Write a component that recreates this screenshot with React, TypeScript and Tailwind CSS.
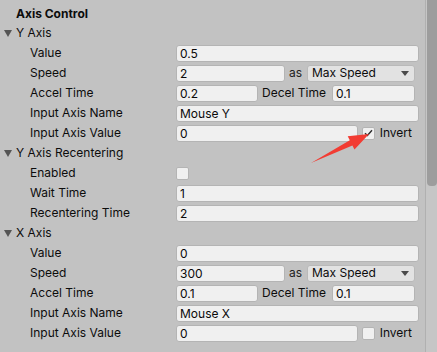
import React from 'react';

const font = { fontFamily: 'Inter, "Noto Sans", sans-serif' };

function Field({ value, className = '' }: { value: string; className?: string }) {
  return (
    <div
      className={`h-[17px] rounded-[3px] border border-[#b4b4b4] bg-[#f0f0f0] pl-[3px] leading-[15px] text-[12px] text-[#0a0a0a] ${className}`}
    >
      {value}
    </div>
  );
}

function Check({ checked }: { checked?: boolean }) {
  return (
    <div className="flex h-[13px] w-[13px] shrink-0 items-center justify-center rounded-[2px] border border-[#b4b4b4] bg-[#f0f0f0]">
      {checked && (
        <svg width="9" height="8" viewBox="0 0 9 8">
          <path d="M1 4.2 L3.4 6.5 L8 1.2" fill="none" stroke="#2b2b2b" strokeWidth="1.4" />
        </svg>
      )}
    </div>
  );
}

function Row({ label, children }: { label: string; children: React.ReactNode }) {
  return (
    <div className="flex h-5 items-center">
      <div className="w-[176px] shrink-0 pl-[30px]">{label}</div>
      <div className="flex min-w-0 flex-1 items-center">{children}</div>
    </div>
  );
}

function Foldout({ label }: { label: string }) {
  return (
    <div className="flex h-5 items-center">
      <svg className="ml-[4px] mr-[4px]" width="8" height="7" viewBox="0 0 8 7">
        <path d="M0 0 L8 0 L4 7 Z" fill="#555555" />
      </svg>
      <span>{label}</span>
    </div>
  );
}

function SpeedRow({ value }: { value: string }) {
  return (
    <Row label="Speed">
      <Field value={value} className="flex-1" />
      <span className="ml-[4px] text-[#222]">as</span>
      <div className="ml-[5px] mr-[4px] flex h-[17px] w-[108px] items-center justify-between rounded-[3px] border border-[#b9b9b9] bg-[#e2e2e2] pl-[4px] pr-[5px]">
        <span>Max Speed</span>
        <svg width="8" height="5" viewBox="0 0 8 5">
          <path d="M0 0 L8 0 L4 5 Z" fill="#4a4a4a" />
        </svg>
      </div>
    </Row>
  );
}

function AccelRow({ accel, decel }: { accel: string; decel: string }) {
  return (
    <Row label="Accel Time">
      <Field value={accel} className="flex-1" />
      <span className="ml-[4px] mr-[6px]">Decel Time</span>
      <Field value={decel} className="mr-[4px] w-[83px]" />
    </Row>
  );
}

function InvertRow({ checked }: { checked?: boolean }) {
  return (
    <Row label="Input Axis Value">
      <Field value="0" className="flex-1" />
      <div className="ml-[4px] mr-[7px] flex items-center">
        <Check checked={checked} />
        <span className="ml-[5px]">Invert</span>
      </div>
    </Row>
  );
}

export default function App() {
  return (
    <div className="relative flex h-[352px] w-[437px] overflow-hidden bg-[#c2c2c2] text-[12px] text-[#0c0c0c]" style={font}>
      <div className="flex-1 pr-[6px] pt-[4px]">
        <div className="flex h-[19px] items-center pl-[16px] font-bold">Axis Control</div>
        <Foldout label="Y Axis" />
        <Row label="Value"><Field value="0.5" className="flex-1" /></Row>
        <SpeedRow value="2" />
        <AccelRow accel="0.2" decel="0.1" />
        <Row label="Input Axis Name"><Field value="Mouse Y" className="flex-1" /></Row>
        <InvertRow checked />
        <Foldout label="Y Axis Recentering" />
        <Row label="Enabled"><Check /></Row>
        <Row label="Wait Time"><Field value="1" className="flex-1" /></Row>
        <Row label="Recentering Time"><Field value="2" className="flex-1" /></Row>
        <Foldout label="X Axis" />
        <Row label="Value"><Field value="0" className="flex-1" /></Row>
        <SpeedRow value="300" />
        <AccelRow accel="0.1" decel="0.1" />
        <Row label="Input Axis Name"><Field value="Mouse X" className="flex-1" /></Row>
        <InvertRow />
      </div>
      {/* scrollbar */}
      <div className="w-[12px] shrink-0 border-l border-[#b0b0b0] bg-[#c6c6c6]">
        <div className="ml-[1px] h-[186px] w-[10px] rounded-b-[4px] bg-[#9d9d9d]" />
      </div>
      {/* annotation arrow */}
      <svg className="pointer-events-none absolute left-0 top-0" width="437" height="352">
        <polygon
          points="311,163 349.8,140.2 347.7,136.2 369,134 354.5,149.6 352.4,145.6"
          fill="#f23c33"
        />
      </svg>
    </div>
  );
}
